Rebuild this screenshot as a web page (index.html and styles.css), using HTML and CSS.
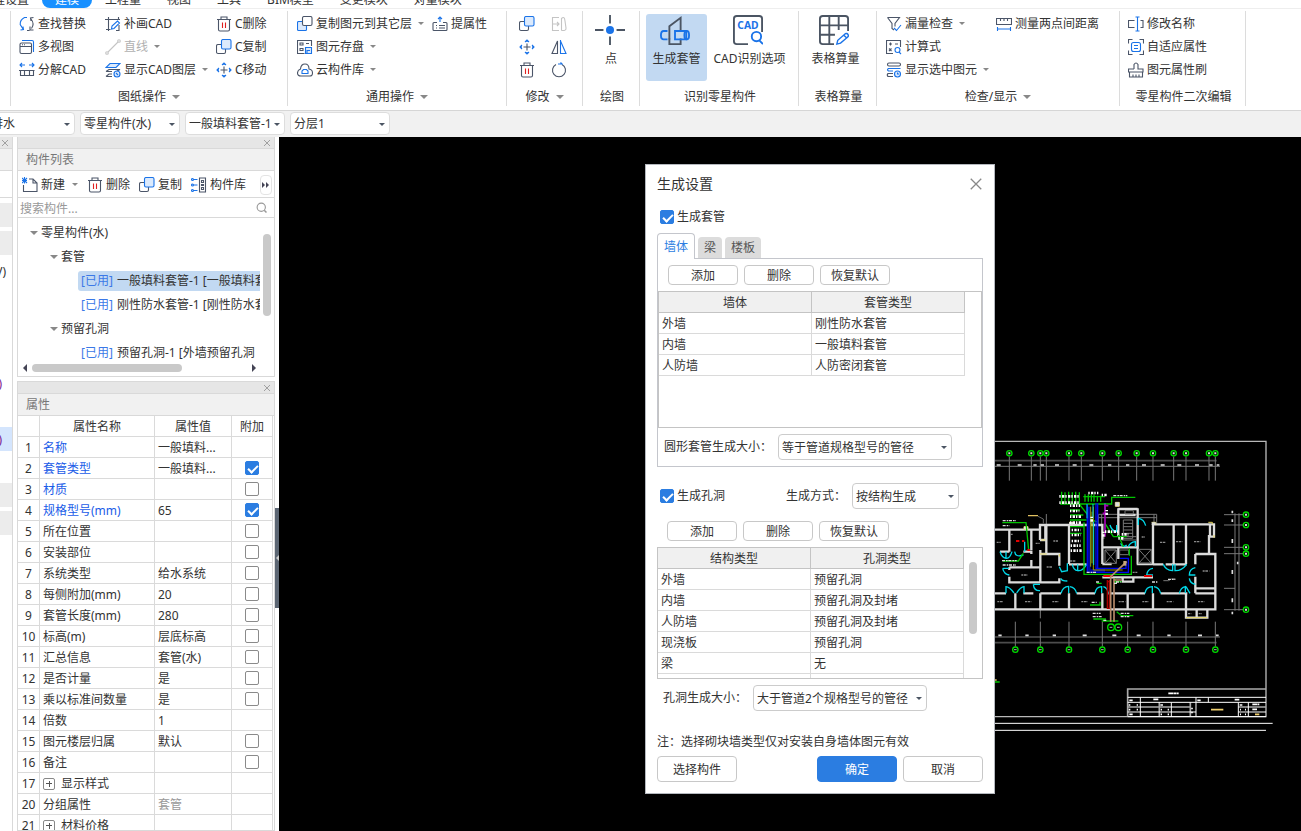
FILE: index.html
```html
<!DOCTYPE html>
<html lang="zh-CN">
<head>
<meta charset="utf-8">
<title>生成设置</title>
<link rel="stylesheet" href="styles.css">
</head>
<body>
<svg class="defs" aria-hidden="true">
  <symbol id="i-find" viewBox="0 0 16 16"><path class="b" d="M8 1.500H5.500C2.500 3 1 5.500 1.200 8.500L4 13M1.500 14l3 -.5-.5-3"/><path class="g" d="M8 14.500h2.500M14.500 1.500l-3 .5.5 3M12 3c2.500 3 3 6 .5 9.500M11 10.500v3.500h3.500"/></symbol>
  <symbol id="i-views" viewBox="0 0 16 16"><path class="b" d="M3 1.500h10q1.500 0 1.500 1.500V13"/><rect class="g" x="1" y="4" width="11.500" height="10.500" rx="1.500"/><path class="g" d="M1 7.500h11.500M3 5.800h1M5 5.800h1"/></symbol>
  <symbol id="i-split" viewBox="0 0 16 16"><path class="b" d="M1 3h5M3 1L1 3l2 2M15 3h-5M13 1l2 2-2 2"/><path class="g" d="M0 8.500h15.500M1.500 8.500v5h13v-5M5.500 8.500v5M10.500 8.500v5"/></symbol>
  <symbol id="i-draw" viewBox="0 0 16 16"><path class="g" d="M0 3.500h15M3.500 1v14M13.500 1v3M1 13.500h4.500M14 9v5.500h-3"/><path class="b" d="M6.500 13l.5-3 5.500-5 2 2-5.500 5.500z"/></symbol>
  <symbol id="i-line" viewBox="0 0 16 16"><path class="d" d="M3 13L13 3"/><circle class="d" cx="2" cy="14" r="1.300"/><circle class="d" cx="14" cy="2" r="1.300"/></symbol>
  <symbol id="i-layers" viewBox="0 0 16 16"><path class="bf" d="M5 1.500h10L11 5.500H1z"/><path class="g" d="M1 9.500h6M1 9.500l3-2h11l-3 1.500M1 14.500h6M1 14.500l3-2.500h3"/><circle class="bf" cx="12" cy="12" r="3"/><path class="b" d="M11 11l2 2"/></symbol>
  <symbol id="i-trash" viewBox="0 0 16 16"><path class="g" d="M1 3.500h14M5 3.500V1h6v2.500M2.500 3.500v10q0 1.500 1.500 1.500h8q1.500 0 1.500-1.500v-10"/><path class="r" d="M6.500 6.500V12M9.500 6.500V12"/></symbol>
  <symbol id="i-copy" viewBox="0 0 16 16"><rect class="g" x=".5" y="5.500" width="9" height="9" rx="1.500"/><rect class="bf" x="5.500" y=".5" width="9.500" height="9.500" rx="1.500"/></symbol>
  <symbol id="i-copyb" viewBox="0 0 16 16"><rect class="bf" x=".5" y="5.500" width="9" height="9" rx="1"/><rect class="gw" x="5.500" y=".5" width="9.500" height="9" rx="1.500"/></symbol>
  <symbol id="i-move" viewBox="0 0 16 16"><path class="g" d="M8 4.500v7M4.500 8h7"/><path class="b" d="M6 3l2-2 2 2M6 13l2 2 2-2M3 6L1 8l2 2M13 6l2 2-2 2M8 1v2M8 13v2M1 8h2M13 8h2"/></symbol>
  <symbol id="i-raise" viewBox="0 0 16 16"><path class="b" d="M8 6V1M6 3l2-2 2 2"/><path class="g" d="M5 6.500H2q-1 0-1 1v6q0 1 1 1h12q1 0 1-1v-6q0-1-1-1h-3M4 9.500h1M7 9.500h6M4 12h1M7 12h6"/></symbol>
  <symbol id="i-save" viewBox="0 0 16 16"><path class="g" d="M7.500 14.500h-7V1.500h14V7M3 4h3v2H3zM3 9.500h3v2H3zM9 4.500h3"/><path class="bf" d="M8.500 8.500h6v6h-6zM10 14v-2.500h3"/></symbol>
  <symbol id="i-cloud" viewBox="0 0 16 16"><path class="g" d="M4 14Q.5 14 .5 11t3-4Q4 2 8 2t4 5q3.500.5 3.500 4T12 14z"/><path class="b" d="M5 11.500h6V9L9.500 7.500h-3L5 9z"/></symbol>
  <symbol id="i-array" viewBox="0 0 16 16"><path class="d" d="M8 1.500H1.500v13H8M1.500 8H8M6 6l2 2-2 2M10.500 14.500v-12q3-3 3.500 2.500l1 7q.5 3-4.500 2.500"/></symbol>
  <symbol id="i-mirror" viewBox="0 0 16 16"><path class="g" d="M6.500 2v12.500H1z"/><path class="b" d="M9.500 2v12.500H15zM9.500 1v14"/></symbol>
  <symbol id="i-rotate" viewBox="0 0 16 16"><path class="g" d="M5 2.500A6.500 6.500 0 1 0 11 2.500"/><path class="b" d="M7 2h4M9.500 .5L11.500 2.500"/></symbol>
  <symbol id="i-funnel" viewBox="0 0 16 16"><path class="g" d="M1.500 1.500h12l-4.500 6v3M1.500 1.500l4.500 6v5l2 1.500"/><path class="b" d="M8 12l2.500 2.500L15 9"/></symbol>
  <symbol id="i-calc" viewBox="0 0 16 16"><path class="g" d="M7 14.500H.5V1.500h14V8M3 5h3M4.500 3.500v3M9 5h3M3 9.500L5.500 12M5.500 9.500L3 12"/><circle class="b" cx="11.500" cy="11" r="2.500"/><path class="b" d="M13 13l2 2"/></symbol>
  <symbol id="i-rows" viewBox="0 0 16 16"><rect class="g" x="1.500" y="1" width="13" height="3" rx="1.500"/><path class="b" d="M7 9H2.500q-2-1.250 0-2.500h12"/><path class="g" d="M7 11.500H2q-1.500 1.500 0 3h5"/><circle class="bf" cx="11.500" cy="12" r="3"/><path class="b" d="M11.500 10.500V12H13"/></symbol>
  <symbol id="i-ruler" viewBox="0 0 16 16"><path class="g" d="M.5 2.500h15v6H.5zM4.500 2.500V5M8 2.500V5M11.500 2.500V5"/><path class="b" d="M1.500 11v4M14.500 11v4M2 13h12"/></symbol>
  <symbol id="i-rename" viewBox="0 0 16 16"><path class="g" d="M6.500 4.500h-6v7h6M12.500 4.500H15v7h-2.500"/><path class="b" d="M9.500 1.500v13M7.500 1h4M7.500 15h4"/></symbol>
  <symbol id="i-fit" viewBox="0 0 16 16"><path class="g" d="M.5 4.500v-4h4M11.500.5h4v4M15.500 11.500v4h-4M4.500 15.500h-4v-4"/><rect class="b" x="3.500" y="3.500" width="9" height="9" rx="2"/><path class="b" d="M6 6.500h4M6 9.500h4"/></symbol>
  <symbol id="i-brush" viewBox="0 0 16 16"><path class="g" d="M6 7V2.500q2-3 4 0V7h5v3H.500V7H6M1.500 10v5h13v-5M5 12.500V15M8 12.500V15M11 12.500V15"/></symbol>
  <symbol id="i-new" viewBox="0 0 16 16"><path class="g" d="M7 2h4l4 4v8.500H1.500V8M11 2v4h4"/><path class="b" d="M0 1l5 5M5 1L0 6M2.500 0v6.500M0 3.500h5"/></symbol>
  <symbol id="i-lib" viewBox="0 0 16 16"><path class="b" d="M2.500 2.500h4M2.500 8h4M2.500 13.500h4"/><circle class="b" cx="1.500" cy="2.500" r="1"/><circle class="b" cx="1.500" cy="8" r="1"/><circle class="b" cx="1.500" cy="13.500" r="1"/><path class="g" d="M8.500 1h6v14h-6zM10.500 3.500h2v2h-2zM10.500 7.500h2v1h-2zM10.500 10.500h2v2h-2z"/></symbol>
  <symbol id="i-x" viewBox="0 0 16 16"><path d="M2 2l12 12M14 2L2 14" fill="none" stroke="currentColor" stroke-width="1.500"/></symbol>
  <symbol id="i-search" viewBox="0 0 16 16"><circle cx="7" cy="7" r="5.500" fill="none" stroke="#999" stroke-width="1.500"/><path d="M11 11l3 3" stroke="#999" stroke-width="2"/></symbol>
</svg>

<nav class="tabs">
  <a href="#">工程设置</a><a href="#" class="on">建模</a><a href="#">工程量</a><a href="#">视图</a><a href="#">工具</a><a href="#">BIM模型</a><a href="#">变更模块</a><a href="#">对量模块</a>
</nav>

<header class="ribbon">
  <section class="group g-paper">
    <div class="cmds">
      <button><svg><use href="#i-find"/></svg>查找替换</button>
      <button><svg><use href="#i-draw"/></svg>补画CAD</button>
      <button><svg><use href="#i-trash"/></svg>C删除</button>
      <button><svg><use href="#i-views"/></svg>多视图</button>
      <button class="off" disabled><svg><use href="#i-line"/></svg>直线<i class="tri"></i></button>
      <button><svg><use href="#i-copy"/></svg>C复制</button>
      <button><svg><use href="#i-split"/></svg>分解CAD</button>
      <button><svg><use href="#i-layers"/></svg>显示CAD图层<i class="tri"></i></button>
      <button><svg><use href="#i-move"/></svg>C移动</button>
    </div>
    <h2>图纸操作<i class="tri big"></i></h2>
  </section>
  <section class="group g-common">
    <div class="cmds">
      <button><svg><use href="#i-copyb"/></svg>复制图元到其它层<i class="tri"></i></button>
      <button><svg><use href="#i-raise"/></svg>提属性</button>
      <button class="wide"><svg><use href="#i-save"/></svg>图元存盘<i class="tri"></i></button>
      <button class="wide"><svg><use href="#i-cloud"/></svg>云构件库<i class="tri"></i></button>
    </div>
    <h2>通用操作<i class="tri big"></i></h2>
  </section>
  <section class="group g-edit">
    <div class="cmds">
      <button aria-label="复制"><svg><use href="#i-copy"/></svg></button>
      <button aria-label="阵列"><svg><use href="#i-array"/></svg></button>
      <button aria-label="移动"><svg><use href="#i-move"/></svg></button>
      <button aria-label="镜像"><svg><use href="#i-mirror"/></svg></button>
      <button aria-label="删除"><svg><use href="#i-trash"/></svg></button>
      <button aria-label="旋转"><svg><use href="#i-rotate"/></svg></button>
    </div>
    <h2>修改<i class="tri big"></i></h2>
  </section>
  <section class="group g-draw">
    <div class="bigs">
      <button><svg viewBox="0 0 32 32"><path d="M16 0v9M16 23v9M0 16h9M23 16h9" stroke="#4b5563" stroke-width="2"/><circle cx="16" cy="16" r="4.300" fill="#1a73e8"/></svg>点</button>
    </div>
    <h2 class="plain">绘图</h2>
  </section>
  <section class="group g-recog">
    <div class="bigs">
      <button class="on"><svg viewBox="0 0 32 32" fill="none" stroke-width="2"><path d="M10 17V12L22 3V18M10 25v6h12v-6" stroke="#4b5563"/><path d="M10 17v9" stroke="#4b5563"/><path d="M8 17H4q-3 0-3 4.500T4 26h4M16 17h12v9H16z" stroke="#1a73e8"/><ellipse cx="28.500" cy="21.500" rx="2.500" ry="4.500" stroke="#1a73e8"/></svg>生成套管</button>
      <button><svg viewBox="0 0 32 32" fill="none" stroke-width="2"><path d="M16 31H4q-3 0-3-3V4q0-3 3-3h24q3 0 3 3v14" stroke="#4b5563"/><text x="16" y="15" text-anchor="middle" class="cadtxt">CAD</text><circle cx="25" cy="23" r="5" stroke="#1a73e8"/><path d="M28 27l4 4" stroke="#1a73e8"/></svg>CAD识别选项</button>
    </div>
    <h2 class="plain">识别零星构件</h2>
  </section>
  <section class="group g-table">
    <div class="bigs">
      <button><svg viewBox="0 0 32 32" fill="none" stroke-width="2"><path d="M16 31H4q-3 0-3-3V4q0-3 3-3h24q3 0 3 3v13M1 11h30M1 21h16M11 1v30M21 1v15" stroke="#4b5563"/><path d="M19 31l1-4 8-7q2-1 3 1t-1 3l-7 6zM26 21l3 3" stroke="#1a73e8" stroke-width="1.500"/></svg>表格算量</button>
    </div>
    <h2 class="plain">表格算量</h2>
  </section>
  <section class="group g-check">
    <div class="cmds">
      <button><svg><use href="#i-funnel"/></svg>漏量检查<i class="tri"></i></button>
      <button><svg><use href="#i-ruler"/></svg>测量两点间距离</button>
      <button class="wide"><svg><use href="#i-calc"/></svg>计算式</button>
      <button class="wide"><svg><use href="#i-rows"/></svg>显示选中图元<i class="tri"></i></button>
    </div>
    <h2>检查/显示<i class="tri big"></i></h2>
  </section>
  <section class="group g-second">
    <div class="cmds">
      <button><svg><use href="#i-rename"/></svg>修改名称</button>
      <button><svg><use href="#i-fit"/></svg>自适应属性</button>
      <button><svg><use href="#i-brush"/></svg>图元属性刷</button>
    </div>
    <h2 class="plain">零星构件二次编辑</h2>
  </section>
</header>

<div class="pickers">
  <span class="sel"><select aria-label="专业"><option>给排水</option></select></span>
  <span class="sel"><select aria-label="构件类型"><option>零星构件(水)</option></select></span>
  <span class="sel"><select aria-label="构件"><option>一般填料套管-1</option></select></span>
  <span class="sel"><select aria-label="分层"><option>分层1</option></select></span>
</div>

<main class="main">
  <aside class="nav">
    <div class="strip"><button aria-label="关闭导航"><svg><use href="#i-x"/></svg></button></div>
    <div class="nav-title"></div>
    <div class="nav-tools"></div>
    <div class="nav-list">
      <div class="hd"></div><div class="hd"></div><div>V)</div><div></div><div></div><div></div><div class="dot">)</div><div></div><div class="cur dot">)</div><div></div><div class="hd"></div><div class="hd"></div>
    </div>
  </aside>

  <div class="side">
    <section class="panel list">
      <div class="strip"><button aria-label="关闭构件列表"><svg><use href="#i-x"/></svg></button></div>
      <h3>构件列表</h3>
      <div class="tools">
        <button><svg><use href="#i-new"/></svg>新建<i class="tri"></i></button>
        <button><svg><use href="#i-trash"/></svg>删除</button>
        <button><svg><use href="#i-copy"/></svg>复制</button>
        <button><svg><use href="#i-lib"/></svg>构件库</button>
        <button class="more" aria-label="更多"><i></i><i></i></button>
      </div>
      <label class="search"><input type="text" aria-label="搜索构件" placeholder="搜索构件..."><svg><use href="#i-search"/></svg></label>
      <div class="tree">
        <ul>
          <li class="l1"><i class="tri big"></i>零星构件(水)</li>
          <li class="l2"><i class="tri big"></i>套管</li>
          <li class="l3 cur"><b>[已用]</b> 一般填料套管-1 [一般填料套管]</li>
          <li class="l3"><b>[已用]</b> 刚性防水套管-1 [刚性防水套管]</li>
          <li class="l2"><i class="tri big"></i>预留孔洞</li>
          <li class="l3"><b>[已用]</b> 预留孔洞-1 [外墙预留孔洞</li>
        </ul>
        <div class="vbar"><div></div></div>
      </div>
      <div class="hbar"><i class="lt"></i><div></div><i class="rt"></i></div>
    </section>

    <section class="panel props">
      <div class="strip"><button aria-label="关闭属性"><svg><use href="#i-x"/></svg></button></div>
      <h3>属性</h3>
      <table>
        <colgroup><col class="c1"><col class="c2"><col class="c3"><col class="c4"></colgroup>
        <thead><tr><th></th><th>属性名称</th><th>属性值</th><th>附加</th></tr></thead>
        <tbody>
          <tr><td>1</td><td class="key">名称</td><td>一般填料...</td><td></td></tr>
          <tr><td>2</td><td class="key">套管类型</td><td>一般填料...</td><td><input type="checkbox" aria-label="套管类型" checked></td></tr>
          <tr><td>3</td><td class="key">材质</td><td></td><td><input type="checkbox" aria-label="材质"></td></tr>
          <tr><td>4</td><td class="key">规格型号(mm)</td><td>65</td><td><input type="checkbox" aria-label="规格型号" checked></td></tr>
          <tr><td>5</td><td>所在位置</td><td></td><td><input type="checkbox" aria-label="所在位置"></td></tr>
          <tr><td>6</td><td>安装部位</td><td></td><td><input type="checkbox" aria-label="安装部位"></td></tr>
          <tr><td>7</td><td>系统类型</td><td>给水系统</td><td><input type="checkbox" aria-label="系统类型"></td></tr>
          <tr><td>8</td><td>每侧附加(mm)</td><td>20</td><td><input type="checkbox" aria-label="每侧附加"></td></tr>
          <tr><td>9</td><td>套管长度(mm)</td><td>280</td><td><input type="checkbox" aria-label="套管长度"></td></tr>
          <tr><td>10</td><td>标高(m)</td><td>层底标高</td><td><input type="checkbox" aria-label="标高"></td></tr>
          <tr><td>11</td><td>汇总信息</td><td>套管(水)</td><td><input type="checkbox" aria-label="汇总信息"></td></tr>
          <tr><td>12</td><td>是否计量</td><td>是</td><td><input type="checkbox" aria-label="是否计量"></td></tr>
          <tr><td>13</td><td>乘以标准间数量</td><td>是</td><td><input type="checkbox" aria-label="乘以标准间数量"></td></tr>
          <tr><td>14</td><td>倍数</td><td>1</td><td></td></tr>
          <tr><td>15</td><td>图元楼层归属</td><td>默认</td><td><input type="checkbox" aria-label="图元楼层归属"></td></tr>
          <tr><td>16</td><td>备注</td><td></td><td><input type="checkbox" aria-label="备注"></td></tr>
          <tr><td>17</td><td><span class="exp"><button class="plus" aria-label="展开显示样式"></button>显示样式</span></td><td></td><td></td></tr>
          <tr><td>20</td><td>分组属性</td><td class="dim">套管</td><td></td></tr>
          <tr><td>21</td><td><span class="exp"><button class="plus" aria-label="展开材料价格"></button>材料价格</span></td><td></td><td></td></tr>
        </tbody>
      </table>
    </section>
  </div>

  <div class="splitter"><button aria-label="收起面板"><i></i></button></div>

  <div class="canvas">
    <svg class="cad" viewBox="279 137 1022 694" preserveAspectRatio="xMinYMin slice" fill="none">
      <g transform="translate(990 435) scale(.33333)">
        <!-- sheet frame -->
        <path stroke="#b8b8b8" stroke-width="4" d="M0 19H828V845H0"/>
        <path stroke="#fff" stroke-width="3" d="M0 865H848M0 886H828"/>
        <!-- axis grid -->
        <path stroke="#4c4c4c" stroke-width="5" d="M15 77H680M15 623H680"/>
        <path stroke="#777" stroke-width="3" d="M15 94H690M15 606H690M58 65V137M124 65V137M151 65V137M169 65V137M237 65V137M274 65V137M337 65V137M386 65V137M440 65V137M489 65V137M551 65V137M588 65V137M657 65V137M676 65V137M76 560V635M151 560V635M237 560V635M337 560V635M413 560V635M489 560V635M588 560V635M676 560V635M735 235V527M747 235V527M702 239H760M702 270H760M702 337H760M702 356H760M702 460H735M702 524H760M169 237V270M151 520V550M325 238H500M325 248H500M325 238V268M335 238V268M500 238V268M492 238V268"/>
        <g stroke="#00d800" stroke-width="4">
          <circle cx="58" cy="55" r="8"/><circle cx="124" cy="55" r="8"/><circle cx="151" cy="55" r="8"/><circle cx="169" cy="55" r="8"/><circle cx="237" cy="55" r="8"/><circle cx="274" cy="55" r="8"/><circle cx="337" cy="55" r="8"/><circle cx="386" cy="55" r="8"/><circle cx="440" cy="55" r="8"/><circle cx="489" cy="55" r="8"/><circle cx="551" cy="55" r="8"/><circle cx="588" cy="55" r="8"/><circle cx="657" cy="55" r="8"/><circle cx="676" cy="55" r="8"/>
          <circle cx="76" cy="644" r="8"/><circle cx="151" cy="644" r="8"/><circle cx="237" cy="644" r="8"/><circle cx="337" cy="644" r="8"/><circle cx="413" cy="644" r="8"/><circle cx="489" cy="644" r="8"/><circle cx="588" cy="644" r="8"/><circle cx="676" cy="644" r="8"/>
          <circle cx="768" cy="239" r="8"/><circle cx="768" cy="270" r="8"/><circle cx="768" cy="337" r="8"/><circle cx="768" cy="356" r="8"/><circle cx="768" cy="524" r="8"/>
          <circle cx="363" cy="577" r="10"/><circle cx="385" cy="577" r="10"/>
        </g>
        <path stroke="#ddd" stroke-width="6" d="M55 55h6M121 55h6M148 55h6M166 55h6M234 55h6M271 55h6M334 55h6M383 55h6M437 55h6M486 55h6M548 55h6M585 55h6M654 55h6M673 55h6M765 239h6M765 270h6M765 337h6M765 356h6M765 524h6"/>
        <path stroke="#aaa" stroke-width="3" d="M72 644h8M147 644h8M233 644h8M333 644h8M409 644h8M485 644h8M584 644h8M672 644h8M359 577h8M381 577h8"/>
        <path stroke="#ddd" stroke-width="5" d="M20 90h12M83 90h12M130 90h10M152 90h10M195 90h12M248 90h12M298 90h12M354 90h10M408 90h10M456 90h12M512 90h12M562 90h12M615 90h12M658 90h10M680 90h8M25 601h10M106 601h10M188 601h10M278 601h12M367 601h12M440 601h12M532 601h10M624 601h12M678 601h8M727 227v8M727 253v8M727 312v12M727 405v12M727 490v12M727 530v8M743 380v8"/>
        <!-- walls -->
        <g stroke="#dcdcdc" stroke-width="7">
          <path d="M15 284H150M150 315V270H337V340M166 270V315H150M169 270V357M58 284V350M124 284V345M237 270V387M58 350H30M100 350H124V357M385 220V305M443 220V387M385 222H443M389 240H437M489 268H660V305H672V268H657M489 268V390M551 270V387M588 270V387M657 300V357M616 357H676V523H15M616 357V388M616 425V475M616 460H676M151 357H208V392M151 345V357M151 357V442M58 397H151M124 375V397M58 397V405M58 425V442H208V430M237 388H290M489 388H520M527 388H590M337 337H440M337 337V387M337 387H365M440 387H489M385 337V372M337 427H489M398 427V440H430V427"/>
          <path d="M15 475H48M100 475H130M151 475H213M260 475H315M355 475H465M512 475H592M616 475H676M76 475V523M151 475V523M237 475V523M337 475V523M413 475V523M489 475V523M588 475V523M588 525V548H652V525M620 525V548"/>
        </g>
        <g stroke="#777" stroke-width="3">
          <path d="M345 345h34v40h-34zM345 345l34 40M379 345l-34 40M446 343h38v42h-38zM446 343l38 42M484 343l-38 42M400 255h28v55h-28zM400 265h28M400 275h28M400 285h28M400 295h28M395 305h46M395 315h46M405 227h25v10h-25zM389 345h27v14h-27zM520 437h16l8-5h12"/>
        </g>
        <path stroke="#e6d860" stroke-width="3" d="M376 202h12v12h-12zM102 275h12v8h-12zM237 262h12v7M485 262h12v8M655 262h12v6M672 308v-8M588 548h64M153 315h13M170 357h-20M208 357v8"/>
        <path fill="#ddd" d="M376 202h12v12h-12zM102 275h12v8h-12zM485 262h12v8h-12zM237 262h12v8h-12z"/>
        <!-- door swings -->
        <path stroke="#00d8e8" stroke-width="4" d="M48 475V455Q58 455 72 474M102 475V455Q92 455 80 474M130 448Q132 468 150 467M130 448H150M213 475Q218 455 236 454V474M260 475Q256 458 240 455M213 430Q214 438 232 438M208 395L215 410 232 407V385M247 388Q250 405 263 407V388M290 388Q278 408 265 407M38 400Q42 418 58 420M38 400H56M30 350Q35 368 48 370V350M66 350Q60 370 50 370M74 350Q76 368 100 360M315 475Q318 455 335 455V474M355 475Q352 458 340 455M465 475Q468 455 487 455V474M512 475Q508 458 492 455M568 475Q572 458 586 455V474M600 475L588 455M520 388Q526 406 548 407V388M590 388Q575 408 555 407V388M616 398Q598 402 598 420H616M616 448Q600 445 598 430M489 400Q472 402 470 420H489M445 250Q462 252 467 272M445 270V250M360 270Q365 288 380 290V270M392 325Q400 340 410 330M415 335Q420 322 436 320V335M104 320V350"/>
        <!-- pipework -->
        <g stroke-width="4">
          <path stroke="#00c400" d="M210 207H365V187H436M215 170V207M225 172V207M236 170V207M247 172V207M257 170V207M268 172V207M285 178V200M295 178V200M304 178V200M312 178V200M322 182V200M332 182V200M280 185H345M240 225H270M240 240H280M240 255H290M240 275H280M240 295H275M270 210L305 255 325 262M282 262V418H424V362M37 263H108L116 345M38 378H85L100 355M418 362V340M310 552H348M380 530L395 542H430M320 445H335M375 430V445M300 510H330V500M335 558H385M372 440H395M345 265L370 305H410M385 300L400 335M15 741h14"/>
          <path stroke="#0008f0" d="M292 208V412H415V370H390M318 205V400H408V378M323 205V398"/>
          <path stroke="#0008a0" stroke-width="8" d="M298 215V407H345"/>
          <path stroke="#9aa000" stroke-width="3" d="M302 215V395M310 215V405H398M306 230V385"/>
          <path stroke="#00d8e8" stroke-width="3" d="M291 207V250M309 207V250M311 260V390M345 205V225"/>
          <path stroke="#a800b8" stroke-width="5" d="M345 208V305M345 212H355M338 235H348"/>
          <path stroke="#a80000" d="M352 435V520H358V435M352 440H358"/>
          <path stroke="#e00000" stroke-width="6" d="M340 423H368M462 423H486M78 318H88M96 318H103M112 345h8"/>
          <path stroke="#b58a6a" stroke-width="5" d="M410 380L362 425V560M372 430V560M372 435H395"/>
          <path stroke="#e0c060" d="M114 242H144M15 735h5"/>
          <path fill="#c8a878" d="M400 378h9v14h-9z"/>
        </g>
        <path stroke="#999" stroke-width="2" d="M144 244L160 252V265"/>
        <!-- annotation marks -->
        <path stroke="#fff" stroke-width="8" stroke-dasharray="4 4 7 3" d="M208 184H270M208 203H270M240 212H270M240 228H268M240 245H275M240 263H275M245 285H272M245 300H272M245 318H272M242 347H275M242 332H272M295 174H325M335 180H350M350 225v15M345 290H385M395 298H415M385 310H400M340 290v20M305 245v20"/>
        <path stroke="#ddd" stroke-width="4" stroke-dasharray="9 3 5 2" d="M370 182H412M38 257H78M38 272H58M36 377H80M38 390H78M308 535H332M308 545H335M392 535H418M392 545H418M340 556H352M318 441H330M378 441H392M486 441H502M305 502H320M372 445H382M534 433H556M290 412H318"/>
        <path stroke="#888" stroke-width="4" stroke-dasharray="6 2 8 3" d="M20 322h12M62 298h8M137 325h12M190 318h14M170 396h18M94 420h20M240 378h18M455 306h10M428 412h14M558 320h20M612 320h20M510 322h18M638 408h20M22 500h18M105 500h20M187 500h20M274 500h20M386 500h20M457 500h20M530 500h20M624 500h20M594 536h10M626 536h10"/>
        <!-- title block -->
        <path stroke="#aaa" stroke-width="5" d="M413 762H828M413 760V845M745 816H828M413 816H600M508 802V845M601 802V845"/>
        <path stroke="#fff" stroke-width="3" d="M413 787H828M413 802H828M413 831H618M745 831H828M413 845H828M451 787V845M544 802V845M618 787V845M655 787V802M745 802V845M775 802V845"/>
        <path stroke="#fff" stroke-width="5" stroke-dasharray="14 1 9 1" d="M535 775H566M490 793H506M418 796H428M622 796H632M734 794H748M787 808H808M787 823H802M416 810h5M440 810h4M416 824h5M440 824h4M418 838h10M511 810h8M512 824h4M533 824h4M512 838h4M533 838h4M606 818v5M606 830v5M749 810h8M750 824h3M765 824h3M750 838h3M765 838h3"/>
        <path stroke="#f0d070" stroke-width="5" d="M663 824H700M795 838H808"/>
      </g>
    </svg>

    <div class="dialog" role="dialog" aria-labelledby="dlg-title">
      <div class="dlg-head"><h1 id="dlg-title">生成设置</h1><button aria-label="关闭"><svg><use href="#i-x"/></svg></button></div>
      <label class="chk first"><input type="checkbox" checked>生成套管</label>
      <div class="dtabs" role="tablist"><button role="tab" class="on">墙体</button><button role="tab">梁</button><button role="tab">楼板</button></div>
      <div class="tabbox">
        <div class="btns"><button>添加</button><button>删除</button><button>恢复默认</button></div>
        <div class="tbox t1">
          <table>
            <thead><tr><th>墙体</th><th>套管类型</th></tr></thead>
            <tbody>
              <tr><td>外墙</td><td>刚性防水套管</td></tr>
              <tr><td>内墙</td><td>一般填料套管</td></tr>
              <tr><td>人防墙</td><td>人防密闭套管</td></tr>
            </tbody>
          </table>
        </div>
        <div class="field"><label for="s1">圆形套管生成大小<span class="colon">：</span></label><span class="sel"><select id="s1"><option>等于管道规格型号的管径</option></select></span></div>
      </div>
      <div class="mode">
        <label class="chk"><input type="checkbox" checked>生成孔洞</label>
        <label for="s2">生成方式<span class="colon">：</span></label><span class="sel short"><select id="s2"><option>按结构生成</option></select></span>
      </div>
      <div class="btns second"><button>添加</button><button>删除</button><button>恢复默认</button></div>
      <div class="tbox t2">
        <table>
          <thead><tr><th>结构类型</th><th>孔洞类型</th></tr></thead>
          <tbody>
            <tr><td>外墙</td><td>预留孔洞</td></tr>
            <tr><td>内墙</td><td>预留孔洞及封堵</td></tr>
            <tr><td>人防墙</td><td>预留孔洞及封堵</td></tr>
            <tr><td>现浇板</td><td>预留孔洞</td></tr>
            <tr><td>梁</td><td>无</td></tr>
            <tr><td></td><td></td></tr>
          </tbody>
        </table>
        <div class="thumb"></div>
      </div>
      <div class="field"><label for="s3">孔洞生成大小<span class="colon">：</span></label><span class="sel"><select id="s3"><option>大于管道2个规格型号的管径</option></select></span></div>
      <p class="note">注<span class="colon">：</span>选择砌块墙类型仅对安装自身墙体图元有效</p>
      <div class="foot"><button>选择构件</button><button class="ok">确定</button><button>取消</button></div>
    </div>
  </div>
</main>
</body>
</html>
```

FILE: styles.css
```css
* { box-sizing: border-box; }
html, body { height: 100%; }
body {
  margin: 0;
  display: flex;
  flex-direction: column;
  overflow: hidden;
  background: #fff;
  color: #333;
  font: 12px/18px "Noto Sans", "Noto Sans CJK SC", sans-serif;
}
button, input, select { font: inherit; color: inherit; }
button { border: 0; background: none; padding: 0; white-space: nowrap; }
h1, h2, h3, p, ul { margin: 0; padding: 0; font-weight: 400; font-size: 12px; }
ul { list-style: none; }
i { display: inline-block; flex: none; }
.colon { font-family: "Noto Sans CJK TC", sans-serif; line-height: 1; }

.defs { position: absolute; width: 0; height: 0; }
.g, .b, .r, .d { fill: none; stroke-width: 1.1; }
.g, .gw { stroke: #4b5568; }
.b, .bf { stroke: #1a73e8; }
.gw, .bf { stroke-width: 1.1; }
.gw { fill: #fff; }
.bf { fill: #dceafc; }
.r { stroke: #e02020; }
.d { stroke: #c4c4c4; }

.tri { border: 3px solid transparent; border-top-color: #888; border-bottom: 0; margin-left: 6px; }
.tri.big { border-width: 4px 4px 0; }

/* top tabs */
.tabs { display: flex; flex: none; align-items: flex-end; height: 8px; margin-left: -32px; overflow: hidden; }
.tabs a { flex: none; padding: 0 13px; line-height: 16px; color: #333; text-decoration: none; }
.tabs .on { background: #1890ff; color: #fff; border-radius: 8px; }

/* ribbon */
.ribbon { display: flex; flex: none; padding: 2px 0 4px 10px; border-top: 1px solid #eee; border-bottom: 1px solid #d6d6d6; }
.group { display: flex; flex-direction: column; flex: none; height: 95px; border-left: 1px solid #dcdcdc; }
.group h2 { display: flex; align-items: center; justify-content: center; height: 18px; margin-top: auto; }
.group h2.plain { padding-left: 2px; }
.cmds { display: grid; grid-auto-rows: 23px; padding: 1px 0 0 8px; }
.cmds button { display: flex; align-items: center; text-align: left; }
.cmds svg, .tools svg { width: 16px; height: 16px; margin-right: 3px; flex: none; }
.cmds .off { color: #b0b0b0; }
.cmds .off .tri { margin-left: 6px; }
.wide { grid-column: 1 / -1; }
.g-paper { width: 277px; }
.g-paper .cmds { grid-template-columns: 86px 111px auto; }
.g-common { width: 219px; }
.g-common .cmds { grid-template-columns: 135px auto; padding-left: 9px; }
.g-edit { width: 76px; }
.g-edit .cmds { grid-template-columns: 32px auto; padding-left: 12px; }
.g-draw { width: 57px; }
.g-recog { width: 159px; }
.g-table { width: 78px; }
.g-table .bigs { padding-right: 4px; }
.g-check { width: 243px; }
.g-check .cmds { grid-template-columns: 110px auto; padding-left: 9px; }
.g-second { width: 127px; border-right: 1px solid #dcdcdc; }
.bigs { display: flex; justify-content: center; gap: 1px; padding-top: 3px; }
.bigs button { display: flex; flex-direction: column; align-items: center; height: 67px; padding: 1px 6px 0; border-radius: 3px; }
.bigs svg { width: 30px; height: 30px; margin: 0 3px 5px 0; }
.bigs .on { background: #c2d9f2; }
.cadtxt { font: 700 11px "Noto Sans", sans-serif; fill: #1a73e8; }

/* selector bar */
.pickers { display: flex; flex: none; gap: 5px; height: 26px; padding: 1px 0 2px; margin-left: -25px; background: #f1f1f1; }
.sel { position: relative; display: inline-flex; }
.sel select { appearance: none; width: 100%; padding: 0 0 0 3px; border: 1px solid #ccc; border-radius: 4px; background: #fff; }
.sel::after { content: ""; position: absolute; right: 5px; top: 50%; margin-top: -1px; border: 3px solid transparent; border-top-color: #4b5563; border-bottom: 0; pointer-events: none; }
.pickers .sel { width: 100px; }
.pickers select { border-color: #ddd; }

/* left side */
.main { display: flex; flex: 1; min-height: 0; }
.nav { width: 13px; flex: none; margin-right: 4px; border-right: 1px solid #d9d9d9; overflow: hidden; }
.strip { display: flex; justify-content: flex-end; align-items: center; height: 12px; background: #e6e6e6; border-bottom: 1px solid #d9d9d9; }
.strip button { display: flex; color: #888; margin-right: 3px; }
.strip svg { width: 8px; height: 8px; }
.nav-title { height: 22px; background: #f1f1f1; border-bottom: 1px solid #d9d9d9; }
.nav-tools { height: 27px; border-bottom: 1px solid #d9d9d9; margin-bottom: 5px; }
.nav-list div { display: flex; justify-content: flex-end; height: 24px; margin-bottom: 4px; line-height: 26px; padding-right: 6px; overflow: hidden; }
.nav-list .hd { background: #ececec; }
.nav-list .cur { background: #d4e5fd; }
.nav-list .dot { color: #7a2090; padding-right: 10px; }
.side { display: flex; flex-direction: column; gap: 4px; width: 258px; flex: none; min-height: 0; }
.panel { border: 1px solid #d9d9d9; border-top: 0; }
.panel h3 { height: 22px; padding-left: 8px; line-height: 22px; background: #f1f1f1; color: #777; border-bottom: 1px solid #d9d9d9; }
.list { flex: none; }
.tools { display: flex; align-items: center; height: 27px; padding: 1px 2px 0 4px; gap: 9px; border-bottom: 1px solid #d9d9d9; }
.tools button { display: flex; align-items: center; }
.tools .tri { margin-left: 7px; }
.tools .more { justify-content: center; width: 12px; height: 20px; margin-left: auto; border: 1px solid #e4e4e4; border-radius: 4px; }
.more i { border: 3px solid transparent; border-left-color: #445; border-right: 0; margin-right: 1px; }
.search { display: flex; align-items: center; height: 20px; padding-right: 6px; border-bottom: 1px solid #d9d9d9; }
.search input { flex: 1; min-width: 0; border: 0; outline: 0; padding: 2px 2px 0; height: 18px; }
.search input::placeholder { color: #999; opacity: 1; }
.search svg { width: 12px; height: 12px; }
.tree { display: flex; height: 144px; padding-top: 3px; }
.tree ul { flex: 1; min-width: 0; overflow: hidden; }
.tree li { display: flex; align-items: center; gap: 4px; height: 20px; margin: 2px 0 4px; white-space: nowrap; overflow: hidden; }
.tree b { font-weight: 400; color: #3b78e7; }
.tree .tri { margin: 0 -1px 0 0; }
.l1 { padding-left: 12px; }
.l2 { padding-left: 32px; }
.tree .l3 { margin-left: 60px; padding-left: 3px; border-radius: 3px 0 0 3px; }
.tree .cur { background: #c2d9f2; }
.vbar { width: 14px; flex: none; padding: 13px 3px 0 3px; }
.vbar div { height: 82px; border-radius: 4px; background: #c9c9c9; }
.hbar { display: flex; align-items: center; justify-content: space-between; height: 14px; padding: 0 18px 2px 5px; }
.hbar div { flex: none; width: 150px; height: 8px; margin: 0 auto 0 5px; border-radius: 4px; background: #c9c9c9; }
.hbar i { border: 4px solid transparent; }
.hbar .lt { border-right-color: #445; border-left: 0; }
.hbar .rt { border-left-color: #445; border-right: 0; }

.props { flex: 1; min-height: 0; overflow: hidden; border-top: 1px solid #d9d9d9; }
table { border-collapse: separate; border-spacing: 0; table-layout: fixed; }
th, td { height: 21px; padding: 1px 3px 0; font-weight: 400; text-align: left; line-height: 18px; white-space: nowrap; overflow: hidden; border-right: 1px solid #dadada; border-bottom: 1px solid #dadada; }
th { text-align: center; }
.props table { width: 255px; }
.c1 { width: 22px; }
.c2 { width: 115px; }
.c3 { width: 77px; }
.c4 { width: 41px; }
.props td:first-child { padding: 1px 0 0; text-align: center; }
.props td:last-child { padding: 0; }
.props .key { color: #1a5ce8; }
.props .dim { color: #999; }
input[type=checkbox] { appearance: none; display: block; flex: none; position: relative; width: 14px; height: 14px; margin: 0; border: 1px solid #8a8a8a; border-radius: 2px; background: #fff; }
.props input[type=checkbox] { margin: 0 auto; }
input[type=checkbox]:checked { background: #2b7de1; border-color: #2b7de1; }
input[type=checkbox]:checked::after { content: ""; position: absolute; left: 4px; top: 1px; width: 4px; height: 8px; border: solid #fff; border-width: 0 2px 2px 0; transform: rotate(45deg); }
.exp { display: flex; align-items: center; gap: 6px; }
.plus { width: 12px; height: 12px; border: 1px solid #888; border-radius: 2px; background: linear-gradient(#555, #555) center / 6px 1px no-repeat, linear-gradient(#555, #555) center / 1px 6px no-repeat; }

.splitter { display: flex; align-items: flex-end; width: 4px; flex: none; padding-bottom: 223px; }
.splitter button { display: flex; align-items: center; justify-content: center; width: 4px; height: 100px; background: #5c6673; }
.splitter i { border: 3px solid transparent; border-right-color: #ccc; border-left: 0; }

/* drawing area */
.canvas { position: relative; flex: 1; min-width: 0; background: #000; overflow: hidden; }
.cad { display: block; width: 100%; height: 100%; }

/* dialog */
.dialog { position: absolute; left: 366px; top: 27px; width: 350px; padding: 0 11px 11px; background: #fff; border: 1px solid #b4b8be; }
.dlg-head { display: flex; align-items: center; justify-content: space-between; height: 38px; }
.dlg-head h1 { font-size: 14px; }
.dlg-head button { display: flex; color: #888; }
.dlg-head svg { width: 14px; height: 14px; }
.chk { display: flex; align-items: center; gap: 3px; height: 20px; padding-left: 3px; }
.chk.first { margin: 4px 0 6px; }
.dtabs { display: flex; align-items: flex-end; gap: 3px; height: 25px; }
.dtabs button { height: 21px; padding: 0 6px; background: #dcdcdc; border-radius: 4px 4px 0 0; color: #555; }
.dtabs .on { position: relative; height: 26px; margin-bottom: -1px; background: #fff; border: 1px solid #c4c6cc; border-bottom: 0; color: #2b7de1; }
.tabbox { padding: 6px 0; border: 1px solid #c4c6cc; }
.btns { display: flex; gap: 6px; padding-left: 10px; margin-bottom: 6px; }
.btns button { width: 70px; height: 20px; }
.btns button, .foot button { padding-top: 1px; background: #fff; border: 1px solid #c8c8c8; border-radius: 4px; }
.btns.second { margin-top: 12px; }
.tbox { display: flex; align-items: flex-start; border: 1px solid #c4c4c4; overflow: hidden; }
.tbox table { width: 306px; flex: none; }
.tbox th { background: #f0f0f0; border-color: #c4c4c4; }
.t1 { height: 137px; }
.t2 { height: 132px; }
.thumb { width: 8px; height: 72px; margin: 14px auto 0; border-radius: 4px; background: #c9c9c9; }
.field { display: flex; align-items: center; gap: 6px; margin-top: 6px; padding-left: 6px; }
.field .sel { width: 174px; height: 26px; }
.field select, .mode select { padding-top: 1px; }
.mode { display: flex; align-items: center; margin-top: 16px; }
.mode .chk { margin-right: 61px; }
.mode .sel { width: 107px; height: 26px; margin-left: 6px; }
.note { margin-top: 21px; line-height: 20px; }
.foot { display: flex; gap: 6px; margin-top: 4px; }
.foot button { width: 80px; height: 26px; }
.foot .ok { margin-left: auto; background: #2b7de1; border-color: #2b7de1; color: #fff; }
```
